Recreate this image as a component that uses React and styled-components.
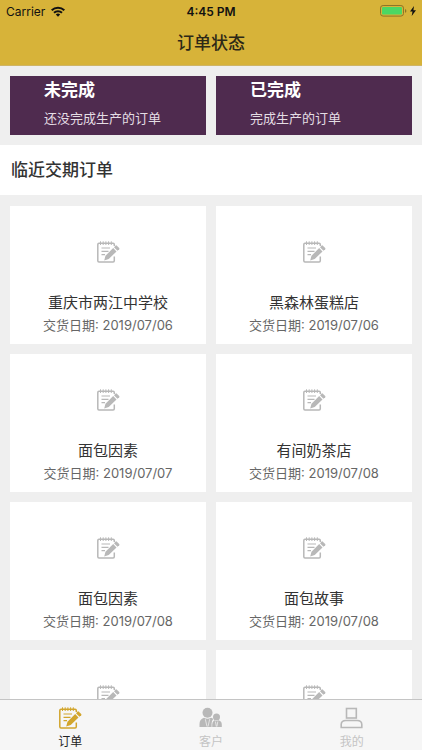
import styled, { createGlobalStyle } from 'styled-components';

const GlobalStyle = createGlobalStyle`
  * {
    box-sizing: border-box;
  }

  body {
    margin: 0;
    background: #efefef;
    color: #333;
    font-family: Inter, 'Noto Sans CJK SC', sans-serif;
  }

  button {
    font-family: inherit;
    cursor: pointer;
  }
`;

const Screen = styled.div`
  display: flex;
  flex-direction: column;
  height: 100vh;
  overflow: hidden;
`;

const Header = styled.header`
  flex: none;
  background: #d7b339;
  border-bottom: 1px solid #cfb566;
`;

const StatusBar = styled.div`
  display: grid;
  grid-template-columns: 1fr auto 1fr;
  align-items: center;
  height: 22px;
  padding: 0 6px;
  color: #111;
  font-size: 12px;
`;

const StatusGroup = styled.div`
  display: flex;
  align-items: center;
  justify-content: ${props => props.$end ? 'flex-end' : 'flex-start'};
  gap: ${props => props.$end ? '3px' : '6px'};
`;

const Clock = styled.time`
  font-weight: 600;
`;

const PageTitle = styled.h1`
  margin: 0;
  color: #2d2817;
  font-size: 17px;
  font-weight: 500;
  line-height: 43px;
  text-align: center;
`;

const Content = styled.main`
  flex: 1;
  min-height: 0;
  overflow: hidden;
`;

const Grid = styled.div`
  display: grid;
  grid-template-columns: 1fr 1fr;
  gap: 10px;
  padding: ${props => props.$top || '10px'} 10px 10px;
`;

const StateCard = styled.button`
  display: flex;
  flex-direction: column;
  align-items: flex-start;
  height: 59px;
  padding: 0 34px;
  border: 0;
  background: #4f2b4f;
  color: #fff;
`;

const StateName = styled.strong`
  font-size: 17px;
  font-weight: 700;
  line-height: 28px;
`;

const StateNote = styled.span`
  color: #e4dde4;
  font-size: 13px;
  line-height: 28px;
  white-space: nowrap;
`;

const SectionTitle = styled.h2`
  margin: 0;
  padding: 0 11px;
  background: #fff;
  font-size: 17px;
  font-weight: 500;
  line-height: 50px;
`;

const OrderCard = styled.button`
  display: flex;
  flex-direction: column;
  align-items: center;
  height: 138px;
  padding: 35px 0 0;
  border: 0;
  background: #fff;
  color: #b8b8b8;
`;

const OrderName = styled.span`
  margin-top: 29px;
  color: #333;
  font-size: 15px;
  line-height: 22px;
`;

const OrderDate = styled.span`
  color: #666;
  font-size: 13px;
  line-height: 22px;
`;

const TabBar = styled.nav`
  display: grid;
  grid-template-columns: repeat(3, 1fr);
  flex: none;
  height: 51px;
  border-top: 1px solid #c4c4c4;
  background: #f6f6f6;
`;

const Tab = styled.button`
  display: flex;
  flex-direction: column;
  align-items: center;
  gap: 3px;
  padding: 7px 0 0;
  border: 0;
  background: none;
  color: ${props => props.$active ? '#d2a52c' : '#b8b8b8'};
`;

const TabLabel = styled.span`
  color: ${props => props.$active ? '#222' : '#c4c4c4'};
  font-size: 12px;
  line-height: 20px;
`;

const WifiIcon = () => (
  <svg width="14" height="11" viewBox="0 0 14 11" fill="none" stroke="#111" strokeWidth="2" aria-hidden="true">
    <path d="M.7 4.2a9 9 0 0 1 12.6 0" />
    <path d="M3 6.8a5.7 5.7 0 0 1 8 0" />
    <path d="M7 10.7 4.8 8.5a3.2 3.2 0 0 1 4.4 0Z" fill="#111" stroke="none" />
  </svg>
);

const BatteryIcon = () => (
  <svg width="27" height="12" viewBox="0 0 27 12" aria-hidden="true">
    <rect x=".5" y=".5" width="23" height="10.6" rx="2.6" fill="none" stroke="#8d7528" />
    <rect x="2" y="2" width="20" height="7.6" rx="1.2" fill="#4bd763" />
    <path d="M25 4v3.8q1.4-.6 1.4-1.9T25 4Z" fill="#8d7528" />
  </svg>
);

const BoltIcon = () => (
  <svg width="6" height="10" viewBox="0 0 6 10" aria-hidden="true">
    <path d="M4 0 0 5.6h2.5L1.7 10 6 4.2H3.4Z" fill="#111" />
  </svg>
);

const NoteIcon = () => (
  <svg width="23" height="22" viewBox="0 0 23 22" fill="none" stroke="currentColor" aria-hidden="true">
    <path d="M17.3 5V3.4q0-1.2-1.2-1.2H2Q.8 2.200.8 3.400v16.300Q.8 20.900 2 20.900h14.100q1.200 0 1.200-1.200V15.500" strokeWidth="1.500" />
    <path d="M3.500.3v3.700M6.200.3v3.700M8.900.3v3.700M11.600.3v3.700M14.300.3v3.700" strokeWidth="1" />
    <path d="M4.500 7h8.500M4.500 10.300h7M4.500 13.600h3.500" strokeWidth="1.200" />
    <path d="m16.200 7 3.300 3.500-7.800 7.500-4.500 1.500 1.300-4.800Z" fill="currentColor" stroke="none" />
    <path d="m17 6.200 1.700-1.600q.6-.5 1.200.1l2.300 2.400q.5.600 0 1.100L20.400 9.800Z" fill="currentColor" stroke="none" />
  </svg>
);

const CustomersIcon = () => (
  <svg width="23" height="22" viewBox="0 0 23 22" fill="currentColor" aria-hidden="true">
    <circle cx="8.500" cy="5.800" r="5" />
    <path d="M.5 20v-3q0-4.800 4.500-6.300 3.500 1.900 7 0 1.500.5 2.300 1.400-1.700 1.700-1.700 4.400V20Z" />
    <path d="M13.200 20v-2.500q0-3 2.200-4.200 2.100 1.300 4.200 0 3.200 1 3.200 4.200V20Z" />
    <circle cx="17.500" cy="10" r="3.500" />
    <path d="m6.300 12.200 1.700 7.300M10.700 12.200 9 19.500M16.400 14.500l.9 5M18.800 14.500l-.9 5" stroke="#f6f6f6" strokeWidth=".7" />
  </svg>
);

const ProfileIcon = () => (
  <svg width="23" height="22" viewBox="0 0 23 22" fill="none" stroke="currentColor" strokeWidth="1.600" aria-hidden="true">
    <rect x="6.500" y="1.500" width="9.800" height="9.500" />
    <path d="M1.200 20.500v-3q0-4 4.800-4h11q4.800 0 4.800 4v3Z" />
  </svg>
);

const states = [
  { name: '未完成', note: '还没完成生产的订单' },
  { name: '已完成', note: '完成生产的订单' },
];

const orders = [
  { id: 1, name: '重庆市两江中学校', date: '2019/07/06' },
  { id: 2, name: '黑森林蛋糕店', date: '2019/07/06' },
  { id: 3, name: '面包因素', date: '2019/07/07' },
  { id: 4, name: '有间奶茶店', date: '2019/07/08' },
  { id: 5, name: '面包因素', date: '2019/07/08' },
  { id: 6, name: '面包故事', date: '2019/07/08' },
  // only the top of this row shows above the tab bar
  { id: 7 },
  { id: 8 },
];

const tabs = [
  { label: '订单', Icon: NoteIcon, active: true },
  { label: '客户', Icon: CustomersIcon },
  { label: '我的', Icon: ProfileIcon },
];

const App = () => (
  <Screen>
    <GlobalStyle />
    <Header>
      <StatusBar>
        <StatusGroup>
          Carrier
          <WifiIcon />
        </StatusGroup>
        <Clock>4:45 PM</Clock>
        <StatusGroup $end>
          <BatteryIcon />
          <BoltIcon />
        </StatusGroup>
      </StatusBar>
      <PageTitle>订单状态</PageTitle>
    </Header>
    <Content>
      <Grid>
        {states.map(({ name, note }) => (
          <StateCard key={name} type="button">
            <StateName>{name}</StateName>
            <StateNote>{note}</StateNote>
          </StateCard>
        ))}
      </Grid>
      <SectionTitle>临近交期订单</SectionTitle>
      <Grid $top="11px">
        {orders.map(({ id, name, date }) => (
          <OrderCard key={id} type="button" aria-label={name ? undefined : '订单'}>
            <NoteIcon />
            {name && <OrderName>{name}</OrderName>}
            {date && <OrderDate>交货日期: {date}</OrderDate>}
          </OrderCard>
        ))}
      </Grid>
    </Content>
    <TabBar>
      {tabs.map(({ label, Icon, active }) => (
        <Tab key={label} type="button" $active={active} aria-current={active ? 'page' : undefined}>
          <Icon />
          <TabLabel $active={active}>{label}</TabLabel>
        </Tab>
      ))}
    </TabBar>
  </Screen>
);

export default App;
